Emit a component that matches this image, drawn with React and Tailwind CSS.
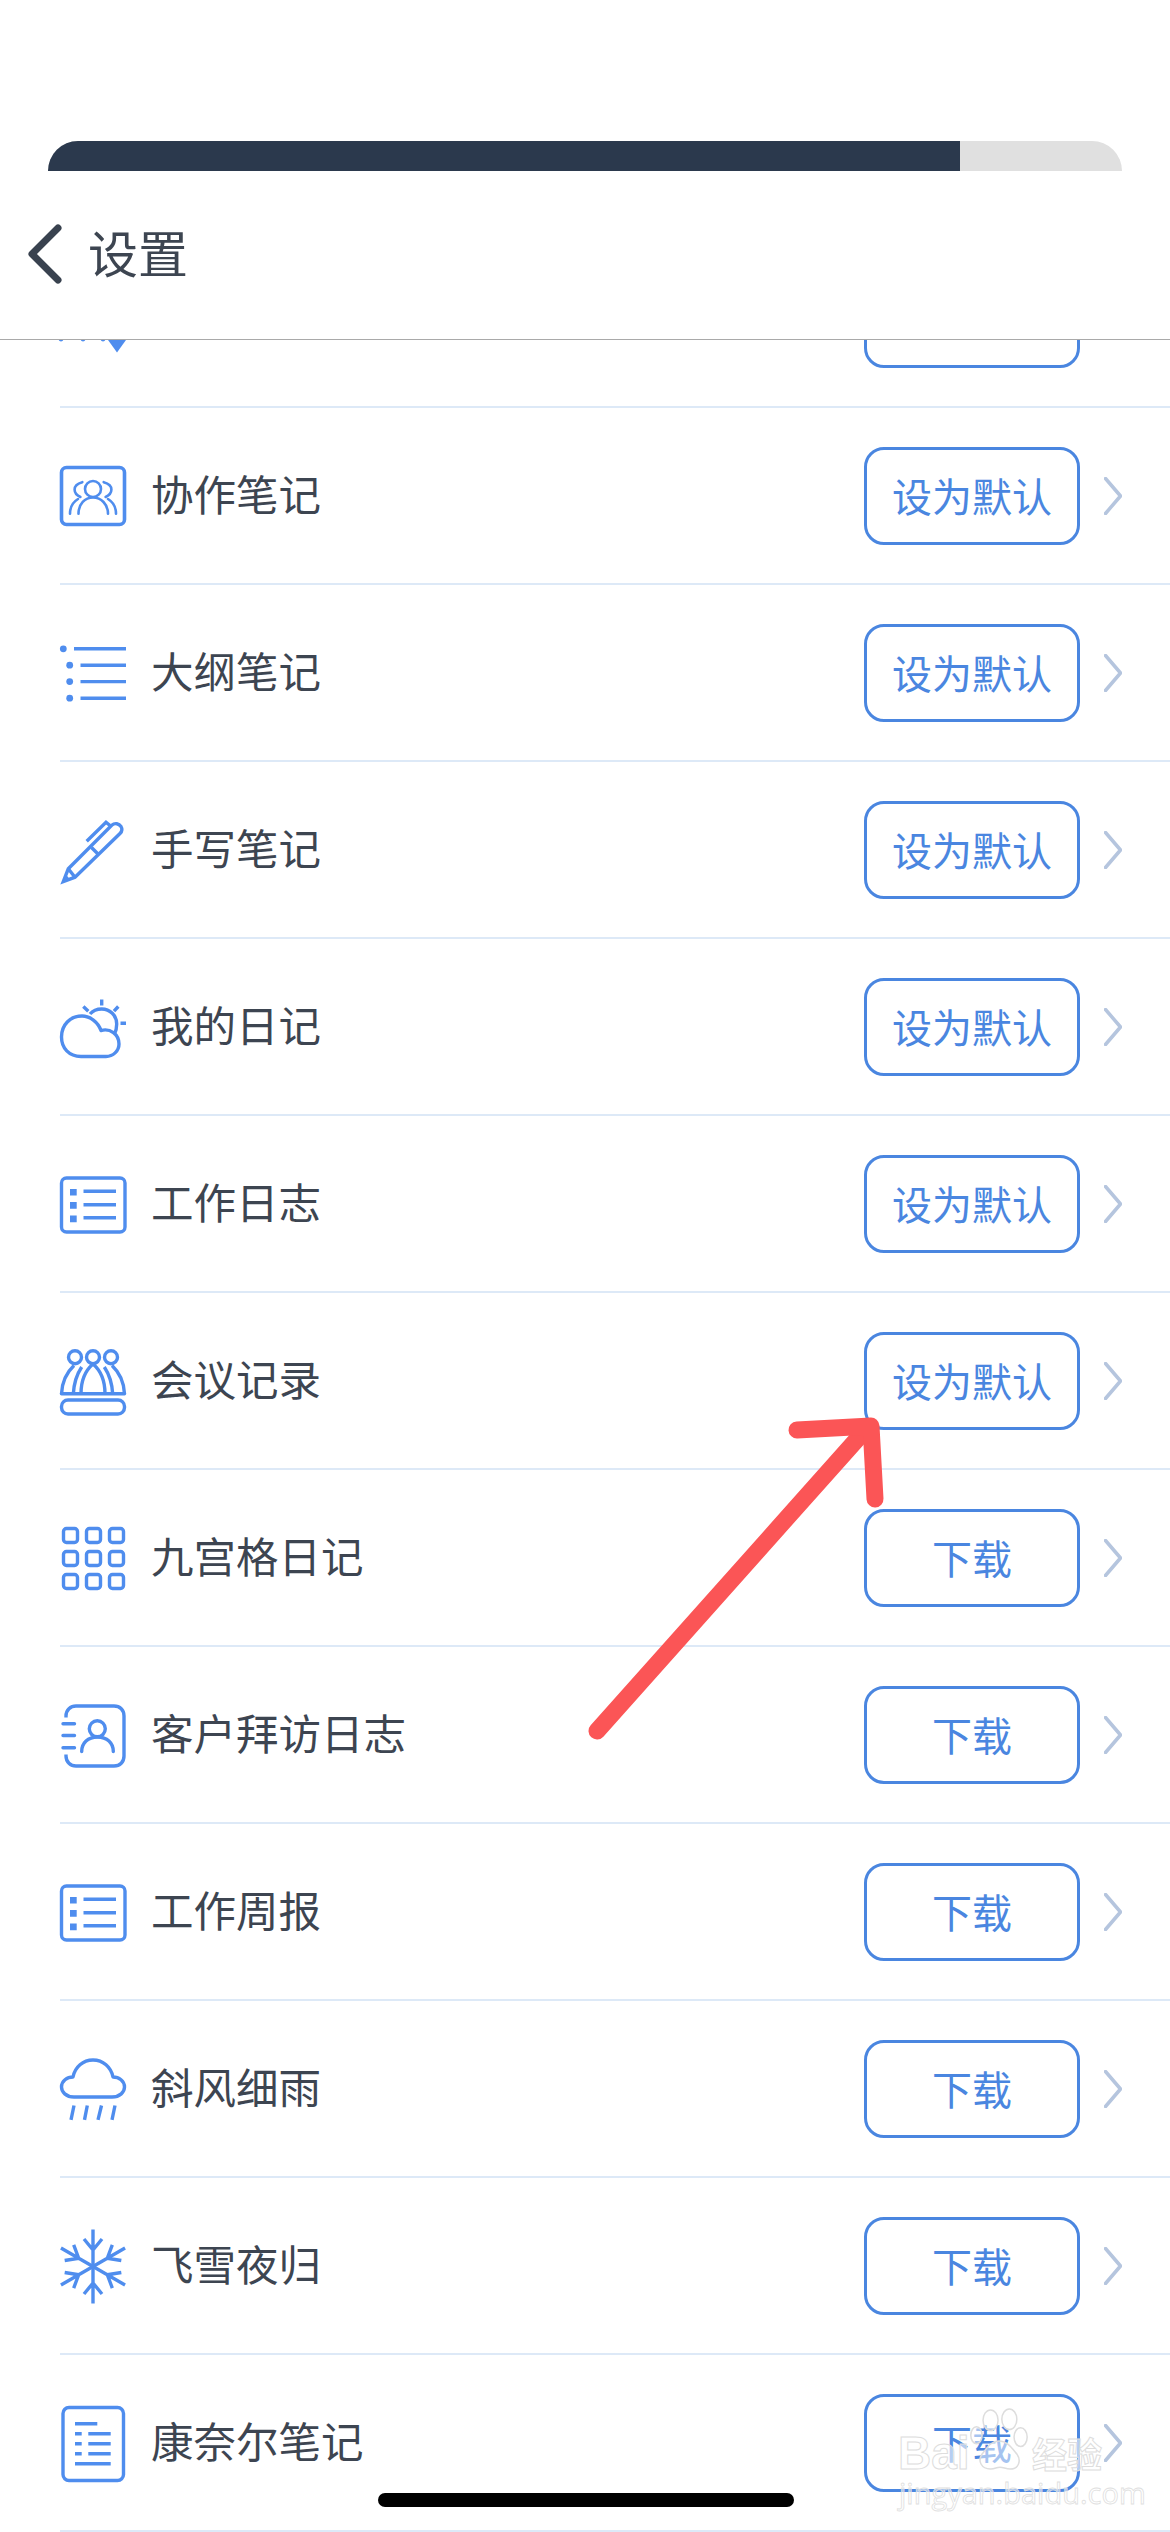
import React from "react";

const Icon = ({ children }) => (
  <svg width="66" height="66" viewBox="0 0 66 66" fill="none" stroke="#4f8dee" strokeWidth="3.4" strokeLinecap="round" strokeLinejoin="round" className="shrink-0 overflow-visible">
    {children}
  </svg>
);

const Partial = () => (
  <Icon>
    <path d="M48 54H66L57 66.5Z" fill="#4f8dee" stroke="none" />
    <circle cx="1" cy="53" r="2.4" fill="#4f8dee" stroke="none" />
    <circle cx="23" cy="53" r="2.4" fill="#4f8dee" stroke="none" />
    <circle cx="43" cy="53" r="2.4" fill="#4f8dee" stroke="none" />
  </Icon>
);

const Collab = () => (
  <Icon>
    <rect x="1.5" y="4.5" width="63" height="57" rx="5" strokeWidth="3.6" />
    <g strokeWidth="2.6">
      <circle cx="33" cy="26" r="8" />
      <path d="M18.5 50.8C18.5 41 25 34.5 33 34.5S48 41 48 50.8" />
      <path d="M22.3 19.2C17.5 20.5 14.6 23 14.6 26.5C14.6 29.5 17 32.5 20.4 34" />
      <path d="M43.7 19.2C48.5 20.5 51.4 23 51.4 26.5C51.4 29.5 49 32.5 45.6 34" />
      <path d="M10 50.8C10 44 13 39 18 36" />
      <path d="M56 50.8C56 44 53 39 48 36" />
    </g>
  </Icon>
);

const Outline = () => (
  <Icon>
    <circle cx="3.3" cy="8.8" r="3.4" fill="#4f8dee" stroke="none" />
    <circle cx="9.7" cy="25.2" r="3.4" fill="#4f8dee" stroke="none" />
    <circle cx="9.7" cy="41.6" r="3.4" fill="#4f8dee" stroke="none" />
    <circle cx="9.7" cy="58.2" r="3.4" fill="#4f8dee" stroke="none" />
    <path d="M14 8.8H66M20.5 25.2H66M20.5 41.6H66M20.5 58.2H66" strokeLinecap="butt" />
  </Icon>
);

const Pen = () => (
  <Icon>
    <path d="M3.3 64.5L8.3 51.8L51.7 8.2C55 5.5 59 6.5 61 9.5C62.5 12 62 14.5 60 16.5L15 60.2Z" strokeLinejoin="miter" strokeLinecap="butt" />
    <path d="M26.7 24.2L46 5.2L50 8.5" strokeLinecap="butt" strokeLinejoin="miter" />
    <path d="M31.5 30.5L38.5 37.5M8.3 51.8L15 60.2" strokeLinecap="butt" />
    <path d="M3.3 64.5L6 57.5L10 62.5Z" fill="#4f8dee" stroke="none" />
  </Icon>
);

const Diary = () => (
  <Icon>
    <path d="M21 62.5C9 62.5 1.5 54 1.5 43C1.5 31 10 22 22 22C30 22 38 28 41 36.5C50 34 59 40 59 50C59 57 53 62.5 46 62.5Z" />
    <path d="M30 20C33 16.5 37 15 41.7 15C50 15 56.7 21.5 56.7 30C56.7 33.5 56 37 54.5 40" strokeLinecap="butt" />
    <path d="M41.7 5.5V11.5M23.3 12.5L28.3 17.2M58.3 12.5L54 17.2M60.5 29.2H66" strokeLinecap="butt" />
  </Icon>
);

const ListBox = () => (
  <Icon>
    <rect x="1.5" y="7" width="63.5" height="54" rx="5" />
    <path d="M10 18H16.7V24.5H10ZM10 31H16.7V37.8H10ZM10 44.5H16.7V51.2H10Z" fill="#4f8dee" stroke="none" />
    <path d="M23.5 20.2H56M23.5 33.8H56M23.5 46.8H56" strokeLinecap="butt" />
  </Icon>
);

const Meeting = () => (
  <Icon>
    <circle cx="15" cy="9.2" r="6.5" />
    <circle cx="33" cy="9.2" r="6.5" />
    <circle cx="51" cy="9.2" r="6.5" />
    <path d="M21 45.8C21 32 26 22 33 16C40 22 45 32 45 45.8" strokeLinecap="butt" />
    <path d="M1.5 45.8H64.5" />
    <path d="M1.5 45.8C2 35 6 25 14 17.5M13.3 45.8C14 35 17 26 21.7 19M64.5 45.8C64 35 60 25 52 17.5M52.7 45.8C52 35 49 26 44.3 19" strokeLinecap="butt" />
    <rect x="1.5" y="52" width="63" height="14" rx="6.5" />
  </Icon>
);

const Grid9 = () => (
  <Icon>
    {[3.5, 26.5, 49.5].map((y) =>
      [3.5, 26.5, 49.5].map((x) => <rect key={`${x}-${y}`} x={x} y={y} width="14" height="14" rx="3" />)
    )}
  </Icon>
);

const Visit = () => (
  <Icon>
    <path d="M6 15.5V14C6 8 10.5 4 16 4H54C60 4 64 8 64 14V54C64 60 60 64 54 64H16C10.5 64 6 60 6 54V52.5" strokeLinecap="butt" />
    <path d="M3 21.8H14.5M3 33.5H14.5M3 45.8H14.5" />
    <circle cx="37.3" cy="26.8" r="8" />
    <path d="M21.7 49.5C21.7 41 28 35 37.5 35C47 35 53.3 41 53.3 49.5" />
  </Icon>
);

const Rain = () => (
  <Icon>
    <path d="M14 41C6 41 1.5 36 1.5 31C1.5 25 7 21 13 21C15 11 23 4 33 4C43 4 51 11 53 21C59 21 64.5 25 64.5 31C64.5 36 60 41 52 41Z" />
    <path d="M14 49.5L11 63.8M27.3 49.5L24.5 63.8M41.5 49.5L38 63.8M55 49.5L52 63.8" strokeLinecap="butt" />
  </Icon>
);

const Snow = () => (
  <Icon>
    {[0, 60, 120, 180, 240, 300].map((a) => (
      <g key={a} transform={`rotate(${a} 33 33.5)`}>
        <path d="M33 33.5V-3.5M33 17L24 6M33 17L42 6" strokeLinecap="butt" />
      </g>
    ))}
  </Icon>
);

const Cornell = () => (
  <Icon>
    <rect x="3" y="-2.5" width="60.5" height="73" rx="6" />
    <path d="M15 13.8H37.3M15 23.8H21.7M28.3 23.8H50.7M15 33.8H21.7M28.3 33.8H50.7M15 43.8H21.7M28.3 43.8H50.7M15 53.8H50.7" strokeLinecap="butt" />
  </Icon>
);

const SET = "设为默认";
const DL = "下载";
const rows = [
  { name: "", icon: Partial, action: "" },
  { name: "协作笔记", icon: Collab, action: SET },
  { name: "大纲笔记", icon: Outline, action: SET },
  { name: "手写笔记", icon: Pen, action: SET },
  { name: "我的日记", icon: Diary, action: SET },
  { name: "工作日志", icon: ListBox, action: SET },
  { name: "会议记录", icon: Meeting, action: SET },
  { name: "九宫格日记", icon: Grid9, action: DL },
  { name: "客户拜访日志", icon: Visit, action: DL },
  { name: "工作周报", icon: ListBox, action: DL },
  { name: "斜风细雨", icon: Rain, action: DL },
  { name: "飞雪夜归", icon: Snow, action: DL },
  { name: "康奈尔笔记", icon: Cornell, action: DL },
];

const Row = ({ name, icon: I, action }) => (
  <div className="ml-[60px] flex h-[177px] items-center border-b-2 border-[#dde9f7] pr-[48px]">
    <I />
    <span className="ml-[25px] flex-1 pb-[5px] text-[42.5px] leading-none text-[#3d4551]">{name}</span>
    <button className="flex h-[98px] w-[216px] items-center justify-center rounded-[20px] border-[3px] border-[#4a86e0] pb-[2px] text-[40px] leading-none text-[#4a86e0]">
      {action}
    </button>
    <svg width="18" height="38" viewBox="0 0 18 38" fill="none" stroke="#b5c5de" strokeWidth="3.5" strokeLinecap="round" strokeLinejoin="round" className="ml-[24px] shrink-0">
      <path d="M1.5 1.5L16.5 19L1.5 36.5" />
    </svg>
  </div>
);

export default function App() {
  return (
    <div
      className="relative h-[2532px] w-[1170px] overflow-hidden bg-white"
      style={{ fontFamily: '"Noto Sans CJK SC", "Noto Sans", sans-serif' }}
    >
      <div className="pt-[141px]">
        <div className="mx-[48px] flex h-[30px] overflow-hidden rounded-t-[30px] bg-[#e0e0e0]">
          <div className="w-[912px] bg-[#2b394d]" />
        </div>
      </div>
      <header className="flex h-[169px] items-center border-b border-[#a9a9a9] bg-white">
        <svg width="36" height="60" viewBox="0 0 36 60" fill="none" stroke="#39424f" strokeWidth="7" strokeLinecap="round" strokeLinejoin="round" className="ml-[27px] mb-[2px] shrink-0">
          <path d="M31 4L5 30L31 56" />
        </svg>
        <span className="ml-[25px] pb-[8px] text-[50px] leading-none text-[#3d4551]">设置</span>
      </header>
      <div className="h-[2192px] overflow-hidden">
        <div className="-mt-[109px]">
          {rows.map((r, i) => (
            <Row key={i} {...r} />
          ))}
        </div>
      </div>

      {/* red annotation arrow */}
      <svg width="1170" height="2532" viewBox="0 0 1170 2532" fill="none" stroke="#fb5556" strokeWidth="17" strokeLinecap="round" strokeLinejoin="round" className="pointer-events-none absolute left-0 top-0">
        <path d="M597 1731L868 1427" />
        <path d="M797 1430L871 1426L875 1499" />
      </svg>

      {/* watermark */}
      <div className="pointer-events-none absolute left-[896px] top-[2405px] h-[104px] w-[212px]">
        <span
          className="absolute left-[2px] top-[25px] text-[46px] font-bold leading-none text-white/60 [-webkit-text-stroke:1px_#dddddd]"
          style={{ fontFamily: '"Liberation Sans", sans-serif' }}
        >
          Bai
        </span>
        <svg width="62" height="68" viewBox="0 0 66 68" fill="#ffffff" fillOpacity="0.5" stroke="#dddddd" strokeWidth="1.6" className="absolute left-[72px] top-0">
          <ellipse cx="9" cy="30" rx="6" ry="9" />
          <ellipse cx="24" cy="14" rx="8" ry="11" />
          <ellipse cx="44" cy="13" rx="8" ry="11" />
          <ellipse cx="56" cy="32" rx="7" ry="10" />
          <path d="M33 36C24 36 20 44 15 50C10 57 14 66 24 66C29 66 30 64 34 64C38 64 40 66 45 66C54 66 57 57 52 50C47 44 42 36 33 36Z" />
        </svg>
        <span className="absolute left-[136px] top-[30px] text-[35px] font-bold leading-none text-white/60 [-webkit-text-stroke:1px_#dddddd]">
          经验
        </span>
        <span
          className="absolute left-[3px] top-[73px] text-[29px] leading-none text-white/50 [-webkit-text-stroke:0.8px_#e0e0e0]"
          style={{ fontFamily: '"Open Sans", sans-serif' }}
        >
          jingyan.baidu.com
        </span>
      </div>

      {/* home indicator */}
      <div className="absolute left-[378px] top-[2493px] h-[14px] w-[416px] rounded-full bg-black" />
    </div>
  );
}
